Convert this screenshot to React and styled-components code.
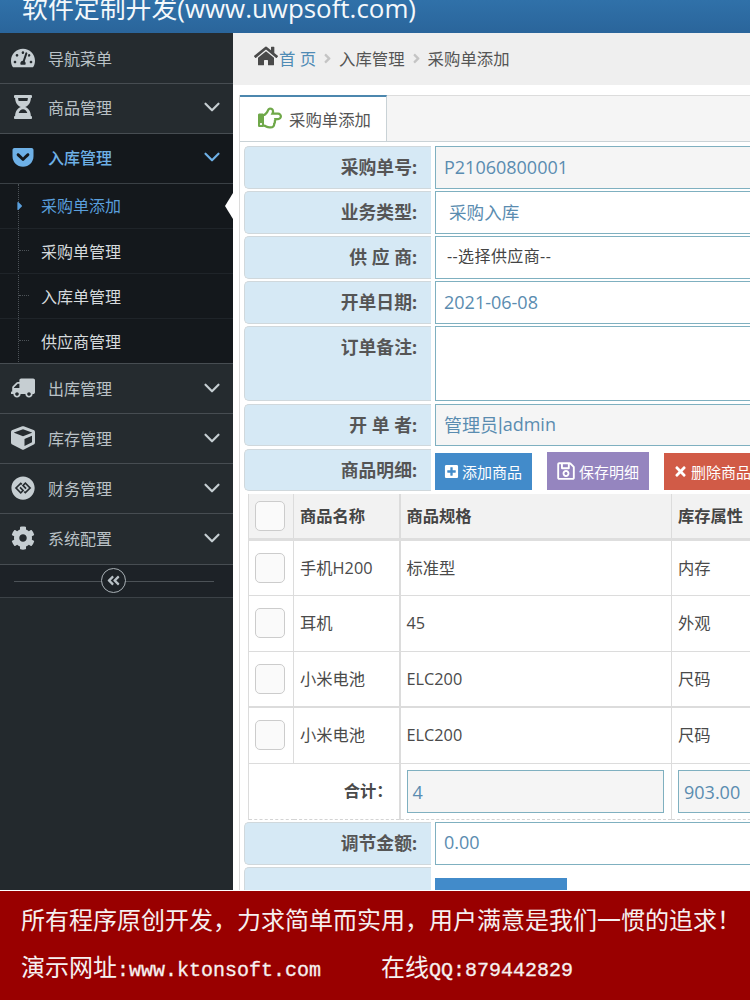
import React from "react";
import styled, { createGlobalStyle } from "styled-components";
import { ChevronDown } from "lucide-react";
import {
  FaTachometerAlt,
  FaHourglassHalf,
  FaGetPocket,
  FaTruck,
  FaCube,
  FaGgCircle,
  FaCog,
  FaAngleDoubleLeft,
  FaCaretRight,
  FaHome,
  FaAngleRight,
  FaRegHandPointRight,
  FaPlusSquare,
  FaRegSave,
  FaTimes,
} from "react-icons/fa";

const Global = createGlobalStyle`
  html, body { margin: 0; padding: 0; background: #fff; }
  * { box-sizing: border-box; }
  body { font-family: "Noto Sans CJK SC", "Open Sans", sans-serif; }
`;

const Shell = styled.div`
  position: relative;
  width: 750px;
  height: 1000px;
  overflow: hidden;
  font-family: "Open Sans", "Noto Sans CJK SC", sans-serif;
`;

const TopBar = styled.header`
  height: 33px;
  background: linear-gradient(#3071a9, #2a659b);
  color: #f4f8fb;
  font-size: 25.9px;
  line-height: 16px;
  padding-left: 22px;
  overflow: hidden;
  white-space: nowrap;
`;

const Body = styled.div`
  display: flex;
  height: 967px;
`;

const Sidebar = styled.aside`
  flex: 0 0 233px;
  background: #23292d;
`;

const NavItem = styled.div`
  height: ${(p) => p.$h || 50}px;
  display: flex;
  align-items: center;
  padding: 0 0 ${(p) => p.$pb ?? 3}px 11px;
  background: ${(p) => (p.$open ? "#14181c" : "#252b2f")};
  border-bottom: 1px solid ${(p) => (p.$open ? "#3a4045" : "#474d52")};
  color: ${(p) => (p.$open ? "#6eb0e6" : "#b9c1c6")};
  font-size: 16px;
`;

const NavIcon = styled.span`
  width: 24px;
  height: 24px;
  margin-right: 13px;
  display: flex;
  align-items: center;
  justify-content: center;
  color: ${(p) => (p.$open ? "#6eb0e6" : "#c6ced2")};
  font-size: 24px;
  transform: ${(p) => (p.$flip ? "scaleX(-1)" : "none")};
`;

const NavLabel = styled.span`
  flex: 1;
  font-weight: ${(p) => (p.$open ? 500 : 400)};
`;

const NavArrow = styled.span`
  width: 34px;
  display: flex;
  color: ${(p) => (p.$open ? "#6eb0e6" : "#c6ced2")};
`;

const SubMenu = styled.div`
  position: relative;
  background: #14181c;
`;

const TreeLine = styled.i`
  position: absolute;
  left: 18px;
  top: 0;
  bottom: 0;
  border-left: 1px dotted #4c5257;
`;

const SubItem = styled.div`
  position: relative;
  height: 45px;
  display: flex;
  align-items: center;
  padding: 0 0 ${(p) => (p.$active ? 3 : 1)}px 41px;
  font-size: 16px;
  color: ${(p) => (p.$active ? "#5a9fdc" : "#d6dadd")};
  border-bottom: 1px solid #1f2429;
  &:last-child { border-bottom: 1px solid #474d52; }
  &::before {
    content: "";
    position: absolute;
    left: 19px;
    width: 10px;
    border-top: 1px dotted ${(p) => (p.$active ? "transparent" : "#4c5257")};
  }
`;

const ActiveCaret = styled.span`
  position: absolute;
  left: 13px;
  top: 15px;
  color: #5a9fdc;
  font-size: 14px;
  line-height: 14px;
`;

const ActiveNotch = styled.span`
  position: absolute;
  right: 0;
  top: 9px;
  border: 13px solid transparent;
  border-left-width: 0;
  border-right: 8px solid #fff;
`;

const Collapse = styled.div`
  position: relative;
  height: 33px;
  display: flex;
  align-items: center;
  justify-content: center;
  background: #1d2227;
  border-bottom: 1px solid #3c4247;
  &::before {
    content: "";
    position: absolute;
    left: 14px;
    right: 19px;
    top: 16px;
    border-top: 1px solid #4c5257;
  }
`;

const CollapseButton = styled.span`
  position: relative;
  width: 25px;
  height: 25px;
  margin-left: -6px;
  margin-top: -1px;
  border-radius: 50%;
  border: 1px solid #a8b0b5;
  background: #1d2227;
  color: #b9c1c6;
  font-size: 15px;
  display: flex;
  align-items: center;
  justify-content: center;
`;

const Main = styled.main`
  flex: 1;
  min-width: 0;
  overflow: hidden;
  background: #fff;
`;

const Crumbs = styled.nav`
  height: 52px;
  background: #efefef;
  display: flex;
  align-items: center;
  padding: 0 0 3px 21px;
  font-size: 16.4px;
  color: #555;
`;

const HomeIcon = styled(FaHome)`
  color: #4a4a4a;
  font-size: 24px;
  margin-right: 1px;
  margin-top: -3px;
`;

const CrumbLink = styled.span`
  color: #4f8bb5;
`;

const CrumbSep = styled(FaAngleRight)`
  color: #c4c4c4;
  font-size: 15px;
  margin: 2px 4px 0 4px;
`;

const TabPane = styled.section`
  margin: 10px 0 0 6px;
  border-left: 1px solid #dcdcdc;
`;

const TabBar = styled.div`
  height: 47px;
  background: #f5f5f5;
  border-top: 1px solid #dcdcdc;
  border-bottom: 1px solid #c9d2d6;
`;

const Tab = styled.div`
  width: 147px;
  height: 46px;
  margin-top: -1px;
  background: #fff;
  border-top: 2px solid #4c87ae;
  border-right: 1px solid #c9d2d6;
  display: flex;
  align-items: center;
  padding-left: 18px;
  gap: 7px;
  font-size: 16.4px;
  color: #555;
`;

const TabIcon = styled(FaRegHandPointRight)`
  color: #6fa849;
  font-size: 24px;
  margin-top: -3px;
`;

const Form = styled.div`
  padding: 4px 0 0 4px;
`;

const Row = styled.div`
  display: flex;
  height: ${(p) => p.$h || 43}px;
  margin-bottom: ${(p) => p.$gap ?? 2}px;
`;

const Label = styled.div`
  flex: 0 0 187px;
  background: #d6e9f5;
  border: 1px solid #d0d8dc;
  border-right: 0;
  border-radius: 5px 0 0 5px;
  padding-right: 14px;
  font-size: 17.8px;
  font-weight: 700;
  color: #555;
  text-align: right;
  line-height: 40px;
`;

const Field = styled.div`
  flex: 0 0 600px;
  margin-left: 4px;
  border: 1px solid #7fb0c0;
  background: ${(p) => (p.$ro ? "#f5f5f5" : "#fff")};
  color: ${(p) => p.$color || "#5a8cb0"};
  padding: 0 0 ${(p) => p.$pb ?? 2}px ${(p) => p.$pad || 8}px;
  font-size: ${(p) => p.$fs || 18}px;
  letter-spacing: ${(p) => p.$ls || 0}px;
  display: flex;
  align-items: center;
`;

const NarrowBar = styled.span`
  font-family: "Liberation Sans", sans-serif;
`;

const Buttons = styled.div`
  display: flex;
  align-items: flex-end;
  gap: 15px;
  margin: 0 0 1px 4px;
`;

const ActionButton = styled.button`
  flex: none;
  height: ${(p) => p.$h || 37}px;
  width: ${(p) => p.$w}px;
  border: 0;
  padding: 0 0 0 9px;
  background: ${(p) => p.$bg};
  color: #fff;
  font: 15px "Noto Sans CJK SC", sans-serif;
  display: flex;
  align-items: center;
  gap: 3px;
  white-space: nowrap;
`;

const Grid = styled.table`
  margin-left: 4px;
  width: 600px;
  table-layout: fixed;
  border-collapse: collapse;
  font-size: 16.3px;
  line-height: 20px;
  color: #4a4a4a;
  border-left: 1px solid #dcdcdc;
  border-bottom: 1px dashed #d4d4d4;
  margin-bottom: 2px;
`;

const Head = styled.th`
  height: 45px;
  background: #f2f2f2;
  border-right: 1px solid #dcdcdc;
  border-bottom: 3px solid #dedede;
  border-right-width: ${(p) => (p.$thick ? 2 : 1)}px;
  text-align: left;
  padding: 0 6px;
  font-weight: 700;
  font-size: 16.3px;
  color: #444;
`;

const Cell = styled.td`
  height: 56px;
  border-right: 1px solid #dcdcdc;
  border-right-width: ${(p) => (p.$thick ? 2 : 1)}px;
  border-bottom: ${(p) => (p.$heavy ? 2 : 1)}px solid #dcdcdc;
  padding: 0 6px;
`;

const Check = styled.span`
  display: block;
  width: 30px;
  height: 30px;
  border: 1px solid #ccc;
  border-radius: 5px;
  background: #fafafa;
`;

const TotalLabel = styled.td`
  text-align: right;
  font-weight: 700;
  font-size: 16.3px;
  padding-right: 6px;
  border-right: 2px solid #dcdcdc;
`;

const TotalCell = styled.td`
  height: 56px;
  padding: 1px 7px 0 6px;
  border-right: 1px solid #dcdcdc;
`;

const TotalBox = styled.div`
  height: 43px;
  border: 1px solid #7fb0c0;
  background: #f5f5f5;
  color: #5a8cb0;
  font-size: 18px;
  padding-left: 5px;
  display: flex;
  align-items: center;
`;

const Notice = styled.footer`
  position: absolute;
  left: 0;
  right: 0;
  bottom: 0;
  height: 110px;
  background: #990000;
  border-top: 1px solid #fff;
  color: #f6f0f0;
  padding: 14px 0 0 21px;
  white-space: nowrap;
`;

const NoticeLine = styled.div`
  font-size: 24px;
  line-height: 30px;
  margin-bottom: 17px;
`;

const Latin = styled.span`
  font-family: "Liberation Mono", monospace;
  font-size: 20px;
  -webkit-text-stroke: 0.3px #f6f0f0;
  margin-right: ${(p) => p.$mr || 0}px;
`;

const nav = [
  { label: "出库管理", icon: <FaTruck />, flip: true },
  { label: "库存管理", icon: <FaCube /> },
  { label: "财务管理", icon: <FaGgCircle /> },
  { label: "系统配置", icon: <FaCog />, h: 51 },
];

const subs = [
  { label: "采购单添加", active: true },
  { label: "采购单管理" },
  { label: "入库单管理" },
  { label: "供应商管理" },
];

const goods = [
  { name: "手机H200", spec: "标准型", attr: "内存" },
  { name: "耳机", spec: "45", attr: "外观" },
  { name: "小米电池", spec: "ELC200", attr: "尺码", heavy: true },
  { name: "小米电池", spec: "ELC200", attr: "尺码" },
];

export default function App() {
  return (
    <Shell>
      <Global />
      <TopBar>软件定制开发(www.uwpsoft.com)</TopBar>
      <Body>
        <Sidebar>
          <NavItem $h={51} $pb={1}>
            <NavIcon><FaTachometerAlt /></NavIcon>
            <NavLabel>导航菜单</NavLabel>
          </NavItem>
          <NavItem>
            <NavIcon><FaHourglassHalf /></NavIcon>
            <NavLabel>商品管理</NavLabel>
            <NavArrow><ChevronDown size={26} strokeWidth={2} /></NavArrow>
          </NavItem>
          <NavItem $open>
            <NavIcon $open><FaGetPocket /></NavIcon>
            <NavLabel $open>入库管理</NavLabel>
            <NavArrow $open><ChevronDown size={26} strokeWidth={2} /></NavArrow>
          </NavItem>
          <SubMenu>
            <TreeLine />
            {subs.map((s) => (
              <SubItem key={s.label} $active={s.active}>
                {s.active && <ActiveCaret><FaCaretRight /></ActiveCaret>}
                {s.label}
                {s.active && <ActiveNotch />}
              </SubItem>
            ))}
          </SubMenu>
          {nav.map((n) => (
            <NavItem key={n.label} $h={n.h} $pb={2}>
              <NavIcon $flip={n.flip}>{n.icon}</NavIcon>
              <NavLabel>{n.label}</NavLabel>
              <NavArrow><ChevronDown size={26} strokeWidth={2} /></NavArrow>
            </NavItem>
          ))}
          <Collapse>
            <CollapseButton><FaAngleDoubleLeft /></CollapseButton>
          </Collapse>
        </Sidebar>
        <Main>
          <Crumbs>
            <HomeIcon />
            <CrumbLink>首 页</CrumbLink>
            <CrumbSep />
            入库管理
            <CrumbSep />
            采购单添加
          </Crumbs>
          <TabPane>
            <TabBar>
              <Tab><TabIcon />采购单添加</Tab>
            </TabBar>
            <Form>
              <Row>
                <Label>采购单号:</Label>
                <Field $ro>P21060800001</Field>
              </Row>
              <Row>
                <Label>业务类型:</Label>
                <Field $pad={13} $fs={17.6}>采购入库</Field>
              </Row>
              <Row>
                <Label>供 应 商:</Label>
                <Field $pad={11} $fs={16} $ls={0.4} $pb={6} $color="#444">--选择供应商--</Field>
              </Row>
              <Row>
                <Label>开单日期:</Label>
                <Field>2021-06-08</Field>
              </Row>
              <Row $h={75} $gap={3}>
                <Label>订单备注:</Label>
                <Field />
              </Row>
              <Row $h={42} $gap={3}>
                <Label>开 单 者:</Label>
                <Field $ro>管理员<NarrowBar>|</NarrowBar>admin</Field>
              </Row>
              <Row $h={42} $gap={3}>
                <Label>商品明细:</Label>
                <Buttons>
                  <ActionButton $bg="#428bca" $w={97}><FaPlusSquare />添加商品</ActionButton>
                  <ActionButton $bg="#9585bf" $w={102} $h={38}><FaRegSave size={20} />保存明细</ActionButton>
                  <ActionButton $bg="#d15b47" $w={100}><FaTimes />删除商品</ActionButton>
                </Buttons>
              </Row>
              <Grid>
                <colgroup>
                  <col style={{ width: 45 }} />
                  <col style={{ width: 106 }} />
                  <col style={{ width: 272 }} />
                  <col />
                </colgroup>
                <thead>
                  <tr>
                    <Head><Check /></Head>
                    <Head $thick>商品名称</Head>
                    <Head>商品规格</Head>
                    <Head>库存属性</Head>
                  </tr>
                </thead>
                <tbody>
                  {goods.map((g, i) => (
                    <tr key={i}>
                      <Cell $heavy={g.heavy}><Check /></Cell>
                      <Cell $thick $heavy={g.heavy}>{g.name}</Cell>
                      <Cell $heavy={g.heavy}>{g.spec}</Cell>
                      <Cell $heavy={g.heavy}>{g.attr}</Cell>
                    </tr>
                  ))}
                  <tr>
                    <TotalLabel colSpan={2}>合计：</TotalLabel>
                    <TotalCell><TotalBox>4</TotalBox></TotalCell>
                    <TotalCell><TotalBox>903.00</TotalBox></TotalCell>
                  </tr>
                </tbody>
              </Grid>
              <Row>
                <Label>调节金额:</Label>
                <Field>0.00</Field>
              </Row>
              <Row>
                <Label />
                <Buttons>
                  <ActionButton $bg="#428bca" $w={132} $h={31} />
                </Buttons>
              </Row>
            </Form>
          </TabPane>
        </Main>
      </Body>
      <Notice>
        <NoticeLine>所有程序原创开发，力求简单而实用，用户满意是我们一惯的追求！</NoticeLine>
        <NoticeLine>
          演示网址<Latin $mr={60}>:www.ktonsoft.com</Latin>在线<Latin>QQ:879442829</Latin>
        </NoticeLine>
      </Notice>
    </Shell>
  );
}
